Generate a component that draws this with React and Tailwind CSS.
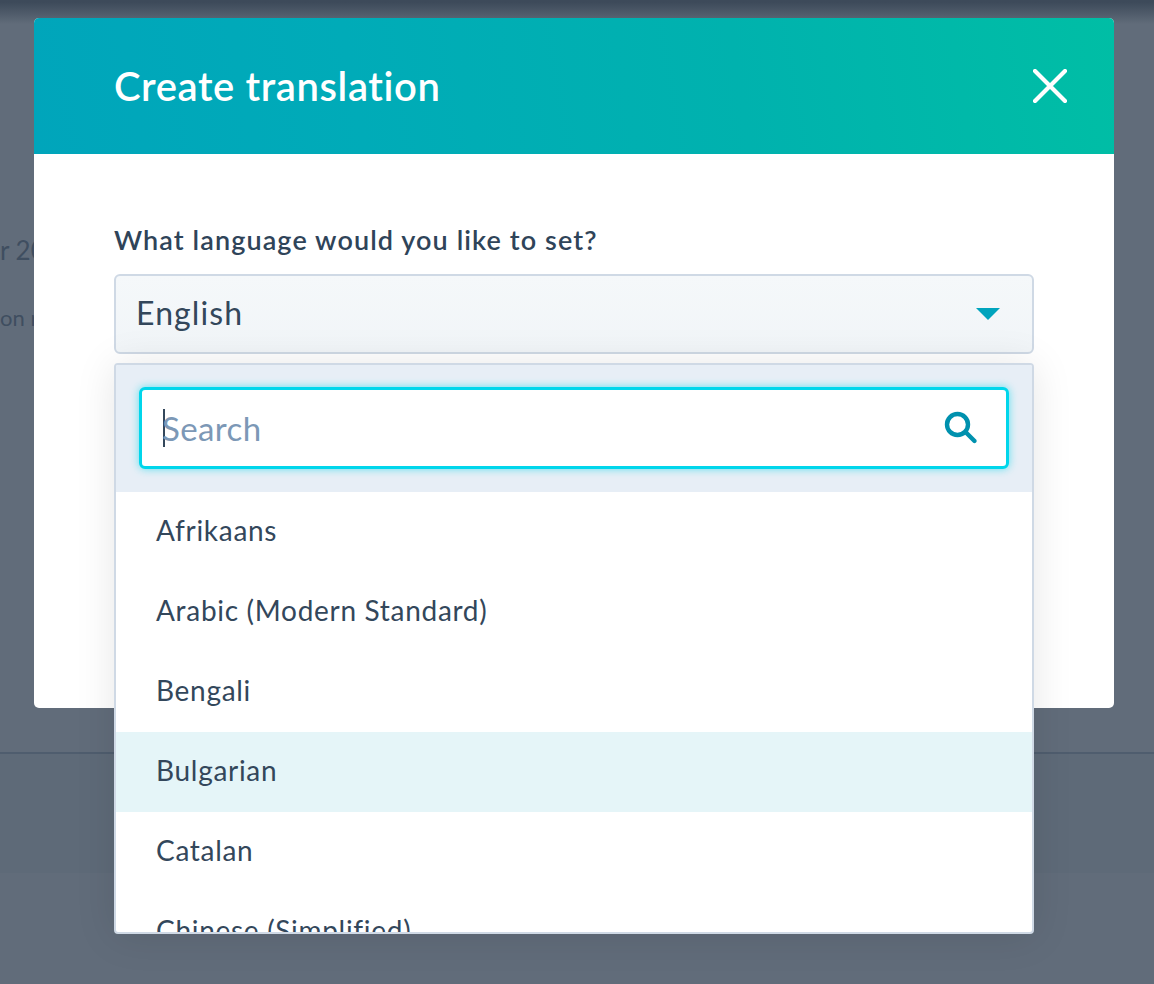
const languages = [
  "Afrikaans",
  "Arabic (Modern Standard)",
  "Bengali",
  "Bulgarian",
  "Catalan",
  "Chinese (Simplified)",
];

function CloseIcon() {
  return (
    <svg width="34" height="34" viewBox="0 0 34 34" fill="none" stroke="#fff" strokeWidth="4.2" strokeLinecap="round">
      <path d="M2 2 L32 32 M32 2 L2 32" />
    </svg>
  );
}

function SearchIcon() {
  return (
    <svg width="34" height="34" viewBox="0 0 34 34" fill="none" stroke="#0091ae" strokeWidth="4.4" strokeLinecap="round">
      <circle cx="13.5" cy="13.5" r="10.5" />
      <path d="M22 21.5 L30.5 30" />
    </svg>
  );
}

function Backdrop() {
  return (
    <div className="flex h-[984px] w-[1154px] flex-col bg-[#616c7a] text-[#3f4e60]">
      <div className="h-[24px] bg-linear-to-b from-[#3d4a5a] from-10% to-[#616c7a]" />
      <div className="h-[208px]" />
      <div className="h-[36px] whitespace-nowrap text-[26px] leading-[36px]">r 2018</div>
      <div className="h-[36px]" />
      <div className="h-[28px] whitespace-nowrap text-[22px] leading-[28px]">on rate</div>
      <div className="h-[420px]" />
      <div className="h-[121px] border-t-2 border-[#4f5d6e] bg-[#5e6a78]" />
    </div>
  );
}

function LanguagePopover() {
  return (
    <div className="absolute left-[80px] top-[345px] z-10 h-[571px] w-[920px] overflow-hidden rounded border-2 border-[#cfd9e5] bg-white shadow-[0_2px_40px_rgba(0,0,0,0.1)]">
      <div className="bg-[#e7eef6] px-[23px] pb-[23px] pt-[22px]">
        <div className="flex h-[82px] items-center rounded-[6px] border-[3px] border-[#00d6eb] bg-white pl-[21px] pr-[28px] shadow-[0_0_8px_rgba(0,214,235,0.6)]">
          <span className="h-[38px] w-[2px] shrink-0 bg-[#33475b]" />
          <span className="-ml-[3px] mt-[2px] flex-1 text-[33px] tracking-[0.4px] text-[#7c98b6]">Search</span>
          <SearchIcon />
        </div>
      </div>
      {languages.map((name) => (
        <div
          key={name}
          className={`flex h-[80px] items-center pb-[4px] pl-[40px] text-[28px] tracking-[0.7px] text-[#33475b] ${name === "Bulgarian" ? "bg-[#e5f5f8]" : ""}`}
        >
          {name}
        </div>
      ))}
    </div>
  );
}

export default function App() {
  return (
    <div className="relative h-[984px] w-[1154px] overflow-hidden font-['Lato',sans-serif]">
      <Backdrop />
      <div className="absolute left-[34px] top-[18px] h-[690px] w-[1080px] rounded-[5px] bg-white">
        <div className="flex h-[136px] items-center justify-between rounded-t-[5px] bg-[linear-gradient(80deg,#00a5bb_0%,#00abb8_30%,#00b2ae_65%,#00b9a9_85%,#00bea5_100%)] pl-[80px] pr-[47px]">
          <h1 className="text-[40px] font-semibold tracking-[0.6px] text-white">Create translation</h1>
          <CloseIcon />
        </div>
        <div className="px-[80px] pt-[66px]">
          <div className="text-[27px] font-semibold leading-[40px] tracking-[1.1px] text-[#2f4459]">What language would you like to set?</div>
          <div className="mt-[14px] flex h-[80px] items-center justify-between rounded-[6px] border-2 border-[#cfd9e5] bg-linear-to-b from-[#f5f8fa] to-[#f1f5f8] pb-[2px] pl-[20px] pr-[32px]">
            <span className="text-[32px] tracking-[1.1px] text-[#33475b]">English</span>
            <span className="mt-[2px] h-0 w-0 border-x-[12px] border-t-[12px] border-x-transparent border-t-[#00a4bd]" />
          </div>
        </div>
        <LanguagePopover />
      </div>
    </div>
  );
}
